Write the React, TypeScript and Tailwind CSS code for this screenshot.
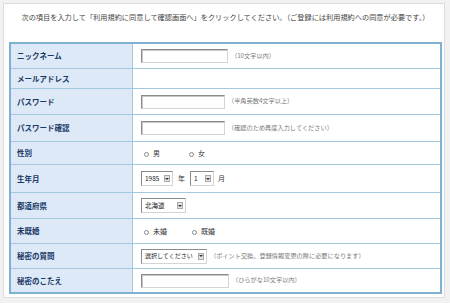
import React from 'react';

const font = { fontFamily: '"Noto Sans CJK JP", "Noto Sans", sans-serif' };

function TextBox({ w = 'w-[87px]' }: { w?: string }) {
  return (
    <div
      className={`${w} h-[14px] bg-white border border-t-[#8a8a8a] border-l-[#8a8a8a] border-b-[#d4d4d4] border-r-[#d4d4d4] shadow-[inset_1px_1px_0_#c8c8c8]`}
    />
  );
}

function Note({ children }: { children: React.ReactNode }) {
  return <span className="text-[6.2px] leading-none text-[#7a7a7a] ml-[3px] whitespace-nowrap">{children}</span>;
}

function Select({ w, text, small }: { w: string; text: string; small?: boolean }) {
  return (
    <div
      className={`${w} h-[15px] bg-white border border-t-[#8a8a8a] border-l-[#8a8a8a] border-b-[#d4d4d4] border-r-[#d4d4d4] flex items-center justify-between pl-[3px] pr-[2px]`}
    >
      <span className={`${small ? 'text-[6px]' : 'text-[6.5px]'} leading-none text-[#222] whitespace-nowrap`}>{text}</span>
      <span className="shrink-0 w-[6px] h-[7px] bg-[#e4e4e4] border border-[#a8a8a8] flex items-center justify-center">
        <span className="w-0 h-0 border-l-[2px] border-r-[2px] border-t-[2px] border-l-transparent border-r-transparent border-t-[#333]" />
      </span>
    </div>
  );
}

function Radio({ label, gap }: { label: string; gap: string }) {
  return (
    <div className={`flex items-center ${gap}`}>
      <span className="w-[5px] h-[5px] rounded-full border border-[#8a8a8a] bg-white mt-[2px]" />
      <span className="ml-[4px] text-[7px] leading-none text-[#333]">{label}</span>
    </div>
  );
}

type Row = { label: string; h: string; content?: React.ReactNode };

const rows: Row[] = [
  {
    label: 'ニックネーム',
    h: 'h-[24px]',
    content: (
      <>
        <TextBox />
        <Note>（10文字以内）</Note>
      </>
    ),
  },
  { label: 'メールアドレス', h: 'h-[20px]' },
  {
    label: 'パスワード',
    h: 'h-[26px]',
    content: (
      <>
        <TextBox w="w-[84px]" />
        <Note>（半角英数4文字以上）</Note>
      </>
    ),
  },
  {
    label: 'パスワード確認',
    h: 'h-[27px]',
    content: (
      <>
        <TextBox w="w-[84px]" />
        <Note>（確認のため再度入力してください）</Note>
      </>
    ),
  },
  {
    label: '性別',
    h: 'h-[23px]',
    content: (
      <>
        <Radio label="男" gap="ml-[3px]" />
        <Radio label="女" gap="ml-[29px]" />
      </>
    ),
  },
  {
    label: '生年月',
    h: 'h-[28px]',
    content: (
      <>
        <Select w="w-[32px]" text="1985" />
        <span className="text-[7px] text-[#333] mx-[5px]">年</span>
        <Select w="w-[24px]" text="1" />
        <span className="text-[7px] text-[#333] ml-[4px]">月</span>
      </>
    ),
  },
  {
    label: '都道府県',
    h: 'h-[26px]',
    content: <Select w="w-[45px]" text="北海道" />,
  },
  {
    label: '未既婚',
    h: 'h-[25px]',
    content: (
      <>
        <Radio label="未婚" gap="ml-[3px]" />
        <Radio label="既婚" gap="ml-[25px]" />
      </>
    ),
  },
  {
    label: '秘密の質問',
    h: 'h-[25px]',
    content: (
      <>
        <Select w="w-[66px]" text="選択してください" small />
        <Note>（ポイント交換、登録情報変更の際に必要になります）</Note>
      </>
    ),
  },
  {
    label: '秘密のこたえ',
    h: 'h-[24px]',
    content: (
      <>
        <TextBox w="w-[88px]" />
        <Note>（ひらがな10文字以内）</Note>
      </>
    ),
  },
];

export default function App() {
  return (
    <div className="w-[450px] h-[303px] bg-[#f2f2f2] pt-[3px] pl-[3px]" style={font}>
      <div className="w-[442px] h-[295px] bg-white border border-[#dcdcdc] pl-[5px] pt-[8px]">
        <p className="text-[7.2px] leading-[10px] text-[#444] text-center w-[433px] whitespace-nowrap">
          次の項目を入力して「利用規約に同意して確認画面へ」をクリックしてください。（ご登録には利用規約への同意が必要です。）
        </p>
        <div className="mt-[20px] w-[433px] border-2 border-[#7eb0cf]">
          {rows.map((r, i) => (
            <div
              key={r.label}
              className={`flex ${r.h} ${i > 0 ? 'border-t border-[#a3c9df]' : ''}`}
            >
              <div className="w-[122px] shrink-0 bg-[#dde9f6] border-r border-[#a3c9df] flex items-center pl-[6px]">
                <span className="text-[7.5px] font-bold leading-none text-[#1a3866] whitespace-nowrap">{r.label}</span>
              </div>
              <div className="flex-1 flex items-center pl-[8px]">{r.content}</div>
            </div>
          ))}
        </div>
      </div>
    </div>
  );
}
